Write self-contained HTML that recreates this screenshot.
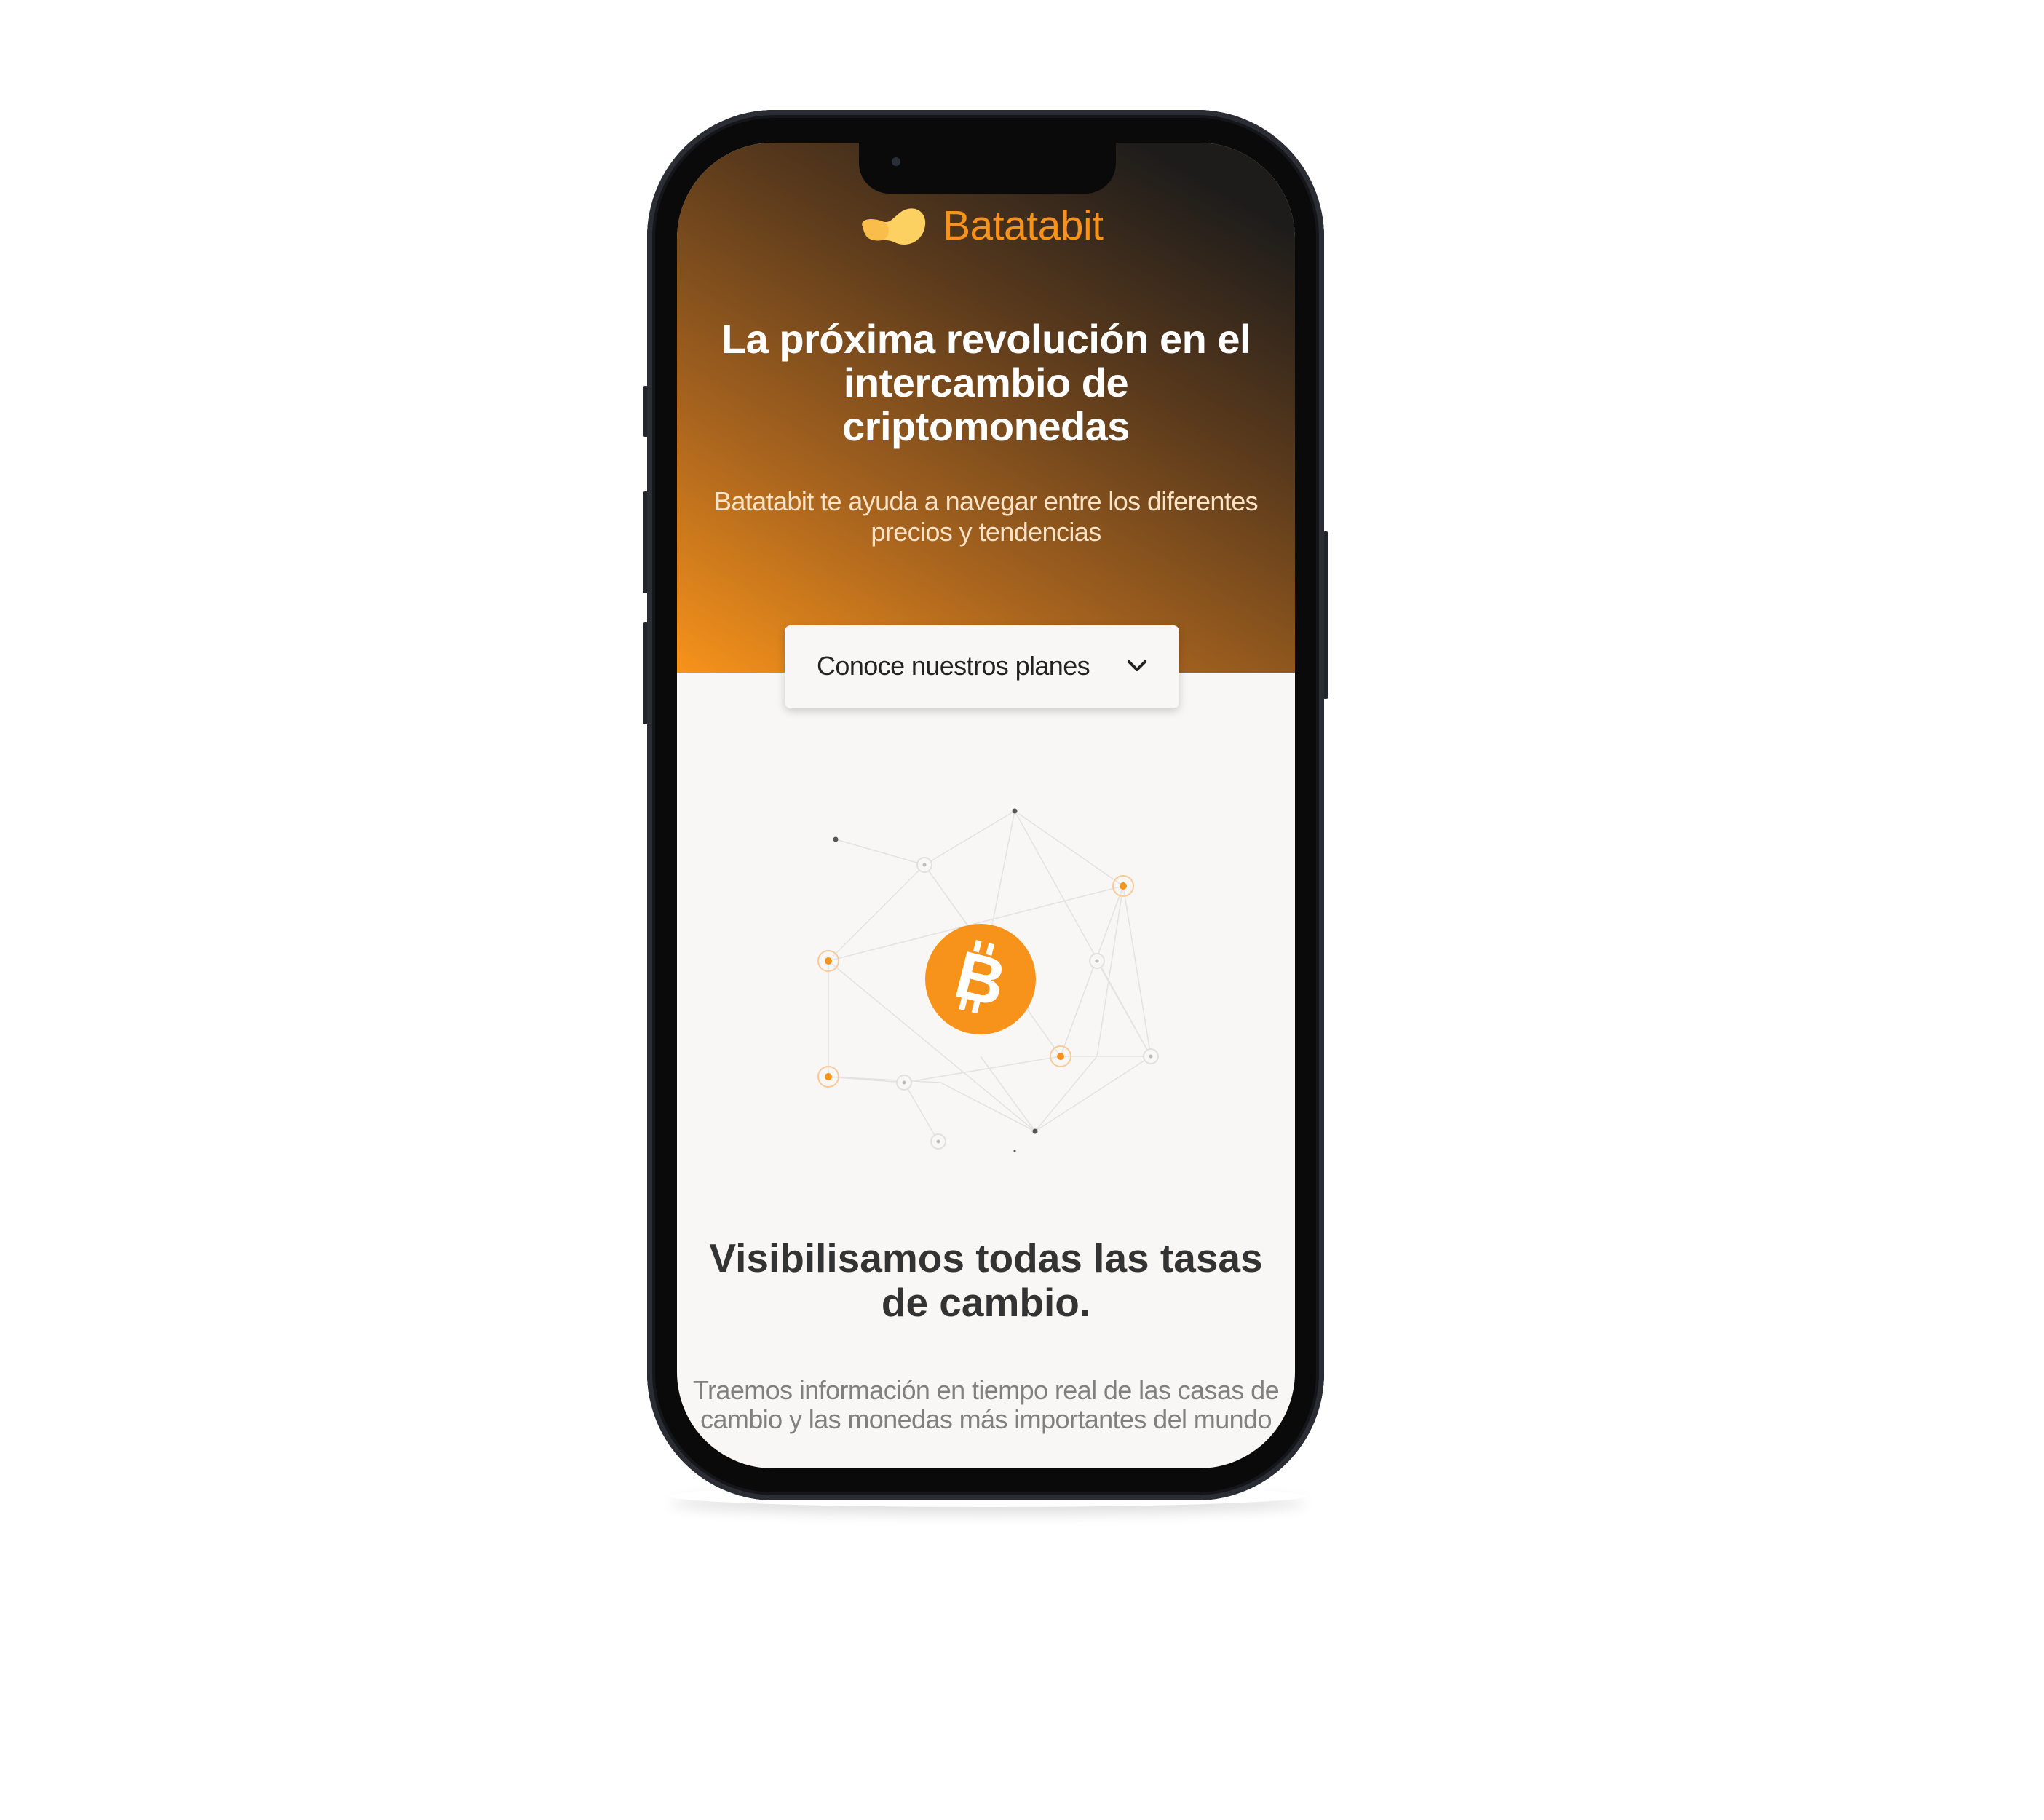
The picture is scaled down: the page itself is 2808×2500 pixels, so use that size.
<!DOCTYPE html>
<html><head><meta charset="utf-8">
<style>
html,body{margin:0;padding:0;background:#fff;}
body{width:2808px;height:2500px;position:relative;overflow:hidden;font-family:"Liberation Sans",sans-serif;}
.shadow{position:absolute;left:920px;top:2040px;width:875px;height:30px;border-radius:50%;box-shadow:0 10px 18px rgba(0,0,0,0.13);}
.phone{position:absolute;left:889px;top:151px;width:930px;height:1910px;border-radius:175px;background:#0a0a0b;box-shadow:inset 0 0 0 7px #2a2d33, inset 0 0 0 11px #15161a;}
.btn{position:absolute;background:#22252b;border-radius:3px;width:8px;}
.screen{position:absolute;left:930px;top:196px;width:849px;height:1821px;border-radius:132px;overflow:hidden;background:#f8f7f5;}
.hero{position:absolute;left:0;top:0;width:851px;height:728px;background:linear-gradient(30deg,#f7931a 0%,#a8641e 30%,#5a3a1c 62%,#1d1c1b 90%);}
.notch{position:absolute;left:250px;top:0;width:353px;height:70px;background:#0a0a0b;border-radius:0 0 42px 42px;}
.cam{position:absolute;left:45px;top:20px;width:12px;height:12px;border-radius:50%;background:#2b2f3a;}
.t{position:absolute;left:0;width:849px;text-align:center;}
.btnbox{position:absolute;left:148px;top:663px;width:542px;height:114px;background:#f8f7f6;border-radius:8px;box-shadow:0 4px 12px rgba(0,0,0,0.18);}
</style></head><body>
<div class="shadow"></div>
<div class="btn" style="left:883px;top:530px;height:70px"></div>
<div class="btn" style="left:883px;top:675px;height:140px"></div>
<div class="btn" style="left:883px;top:855px;height:140px"></div>
<div class="btn" style="left:1817px;top:730px;height:230px"></div>
<div class="phone"></div>
<div class="screen">
  <div class="hero"></div>
  <div class="notch"><div class="cam"></div></div>
  <svg style="position:absolute;left:248px;top:87px" width="98" height="60" viewBox="0 0 98 62">
    <path d="M6 30 C0 18 20 16 34 22 C46 26 50 14 64 6 C82 -2 98 10 94 30 C90 50 70 60 52 52 C40 46 30 50 20 48 C10 46 8 38 6 30Z" fill="#fcd061"/>
    <path d="M6 30 C0 18 20 16 34 22 C40 24 44 30 42 40 C38 50 28 50 20 48 C10 46 8 38 6 30Z" fill="#f8bd4a"/>
  </svg>
  <div style="position:absolute;left:365px;top:85px;font-size:57px;line-height:58px;color:#f7931a;letter-spacing:-0.5px">Batatabit</div>
  <div class="t" style="top:240px;font-size:56px;line-height:60px;font-weight:bold;color:#fff;letter-spacing:-0.5px">La próxima revolución en el<br>intercambio de<br>criptomonedas</div>
  <div class="t" style="top:472px;font-size:36px;line-height:42px;color:#fde3c6;letter-spacing:-0.6px">Batatabit te ayuda a navegar entre los diferentes<br>precios y tendencias</div>
  <div class="btnbox">
    <div style="position:absolute;left:44px;top:35px;font-size:36px;color:#222;letter-spacing:-0.6px">Conoce nuestros planes</div>
    <svg style="position:absolute;left:470px;top:46px" width="28" height="20" viewBox="0 0 28 20"><path d="M3 4 L14 15 L25 4" stroke="#222" stroke-width="4" fill="none" stroke-linecap="round" stroke-linejoin="round"/></svg>
  </div>
  <svg style="position:absolute;left:0;top:0" width="851" height="1821">
    <g stroke="#e2e2e2" stroke-width="1.5" fill="none">
      <path d="M218 957 L340 992 L464 918 L613 1021 L577 1255 L492 1358 L362 1291 L208 1283 L208 1124 L340 992 L527 1255 L651 1255 L613 1021 L527 1255 L312 1291"/>
      <path d="M208 1124 L613 1021 M208 1124 L492 1358 M464 918 L430 1090 M340 992 L410 1090 M464 918 L651 1255 M577 1124 L651 1255 M651 1255 L492 1358 M208 1283 L312 1291 L359 1372 M417 1255 L492 1358"/>
    </g>
    <g fill="#f7931a">
      <circle cx="208" cy="1124" r="14" fill="none" stroke="#f9c99a" stroke-width="2"/><circle cx="208" cy="1124" r="5"/>
      <circle cx="613" cy="1021" r="14" fill="none" stroke="#f9c99a" stroke-width="2"/><circle cx="613" cy="1021" r="5"/>
      <circle cx="527" cy="1255" r="14" fill="none" stroke="#f9c99a" stroke-width="2"/><circle cx="527" cy="1255" r="5"/>
      <circle cx="208" cy="1283" r="14" fill="none" stroke="#f9c99a" stroke-width="2"/><circle cx="208" cy="1283" r="5"/>
    </g>
    <g fill="#bbb">
      <circle cx="340" cy="992" r="10" fill="#f8f7f5" stroke="#e0e0e0" stroke-width="2"/><circle cx="340" cy="992" r="2.5"/>
      <circle cx="577" cy="1124" r="10" fill="#f8f7f5" stroke="#e0e0e0" stroke-width="2"/><circle cx="577" cy="1124" r="2.5"/>
      <circle cx="651" cy="1255" r="10" fill="#f8f7f5" stroke="#e0e0e0" stroke-width="2"/><circle cx="651" cy="1255" r="2.5"/>
      <circle cx="312" cy="1291" r="10" fill="#f8f7f5" stroke="#e0e0e0" stroke-width="2"/><circle cx="312" cy="1291" r="2.5"/>
      <circle cx="359" cy="1372" r="10" fill="#f8f7f5" stroke="#e0e0e0" stroke-width="2"/><circle cx="359" cy="1372" r="2.5"/>
    </g>
    <g fill="#555"><circle cx="218" cy="957" r="3.5"/><circle cx="464" cy="918" r="3.5"/><circle cx="492" cy="1358" r="3.5"/><circle cx="464" cy="1385" r="1.5"/></g>
    <circle cx="417" cy="1149" r="76" fill="#f7931a"/>
    <g transform="rotate(14 417 1149)" fill="#fff">
      <text x="417" y="1180" font-family="Liberation Sans" font-weight="bold" font-size="92" text-anchor="middle">B</text>
      <rect x="398" y="1098" width="8" height="16"/><rect x="416" y="1098" width="8" height="16"/>
      <rect x="398" y="1180" width="8" height="16"/><rect x="416" y="1180" width="8" height="16"/>
    </g>
  </svg>
  <div class="t" style="top:1502px;font-size:55px;line-height:61px;font-weight:bold;color:#333;">Visibilisamos todas las tasas<br>de cambio.</div>
  <div class="t" style="top:1694px;font-size:36px;line-height:40px;color:#808080;letter-spacing:-0.6px">Traemos información en tiempo real de las casas de<br>cambio y las monedas más importantes del mundo</div>
</div>
</body></html>
